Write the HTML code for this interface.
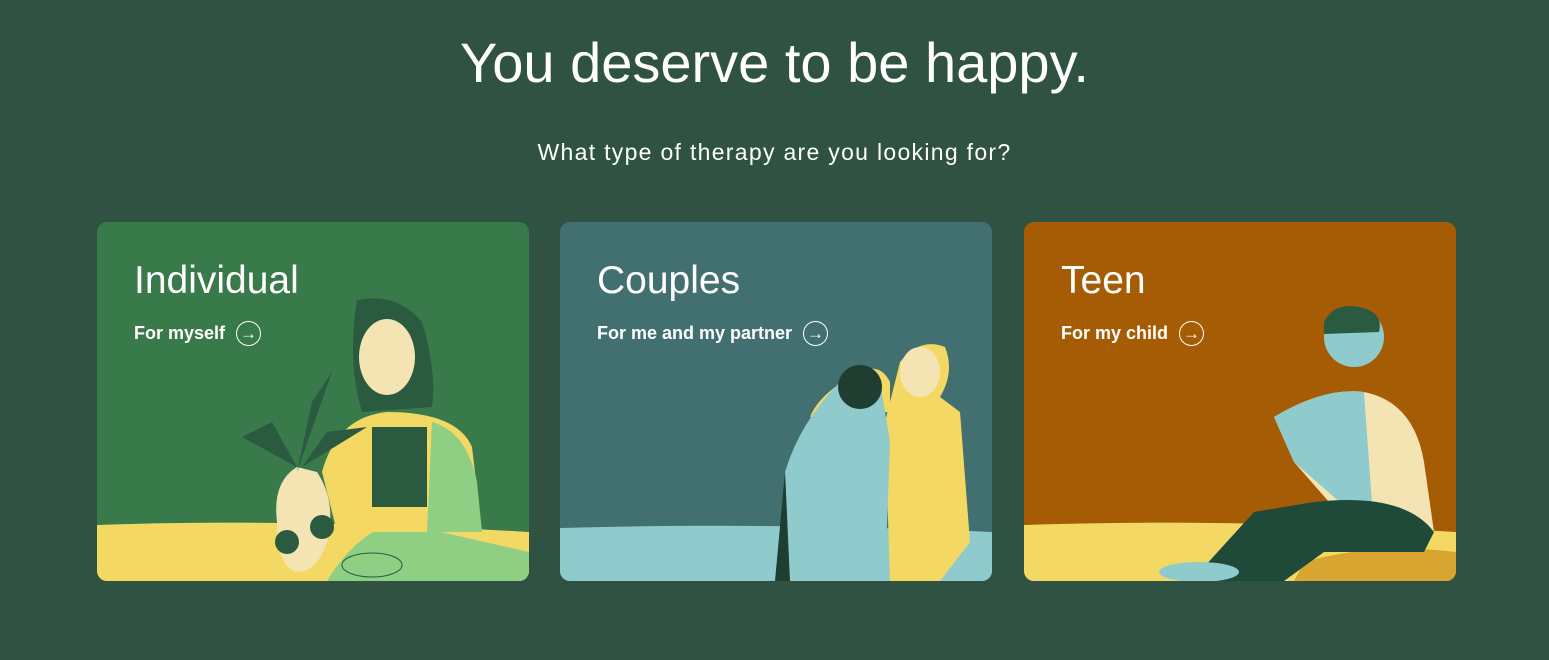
<!DOCTYPE html>
<html><head><meta charset="utf-8"><style>
*{margin:0;padding:0;box-sizing:border-box}
body{width:1549px;height:660px;background:#2f5242;font-family:"Liberation Sans",sans-serif;color:#fff;position:relative;overflow:hidden}
h1{position:absolute;left:0;width:1549px;top:30px;text-align:center;font-weight:normal;font-size:56px}
.sub{position:absolute;left:0;width:1549px;top:139px;text-align:center;font-size:23px;letter-spacing:1.3px}
.card{position:absolute;top:222px;width:432px;height:359px;border-radius:10px;overflow:hidden}
.card svg{position:absolute;left:0;top:0}
.t{position:absolute;left:37px;top:37px;font-size:39px;z-index:2}
.s{position:absolute;left:37px;top:99px;font-size:18px;font-weight:bold;z-index:2;display:flex;align-items:center;gap:11px}
.ar{width:25px;height:25px;border:1.5px solid #fff;border-radius:50%;display:flex;align-items:center;justify-content:center;font-size:17px}
</style></head><body>
<h1>You deserve to be happy.</h1>
<div class="sub">What type of therapy are you looking for?</div>

<div class="card" style="left:97px;background:#397a4a">
<svg width="432" height="359">
<path d="M0 303 Q200 296 432 310 V359 H0Z" fill="#f3d863"/>
<path d="M230 359 Q260 310 300 300 L432 330 V359Z" fill="#8fcf84"/>
<path d="M260 78 Q300 70 325 100 Q340 150 335 185 L265 190 Q250 140 260 78Z" fill="#2a5a3f"/>
<ellipse cx="290" cy="135" rx="28" ry="38" fill="#f5e4b3"/>
<path d="M225 250 Q240 195 290 190 Q360 190 375 225 L385 310 H240Z" fill="#f3d863"/>
<path d="M335 200 Q370 210 380 260 L385 310 H330Z" fill="#8fcf84"/>
<rect x="275" y="205" width="55" height="80" fill="#2a5a3f"/>
<path d="M180 300 Q175 260 200 245 L220 250 Q240 280 230 320 Q220 350 200 350 Q180 345 180 300Z" fill="#f5e4b3"/>
<circle cx="190" cy="320" r="12" fill="#2a5a3f"/><circle cx="225" cy="305" r="12" fill="#2a5a3f"/>
<path d="M200 250 L235 150 L215 180Z M145 215 L200 245 L175 200Z M205 245 L270 205 L230 210Z" fill="#2a5a3f"/>
<ellipse cx="275" cy="343" rx="30" ry="12" fill="#8fcf84" stroke="#2a5a3f"/>
</svg>
<div class="t">Individual</div><div class="s">For myself <span class="ar">&#x2192;</span></div></div>

<div class="card" style="left:560px;background:#426f70">
<svg width="432" height="359">
<path d="M0 306 Q200 300 432 310 V359 H0Z" fill="#8fcbcc"/>
<path d="M340 140 Q360 115 385 125 Q395 150 380 175 L400 190 L410 320 L380 359 H330 L325 200Z" fill="#f3d863"/>
<ellipse cx="360" cy="150" rx="20" ry="25" fill="#f5e4b3"/>
<path d="M300 150 Q320 140 330 160 L330 190 L250 195 Q260 170 300 150Z" fill="#f3d863"/>
<path d="M280 160 Q300 140 320 160 L330 220 L325 359 H230 L225 250 Q240 200 280 160Z" fill="#8fcbcc"/>
<circle cx="300" cy="165" r="22" fill="#1f3d30"/>
<path d="M225 250 L215 359 H230Z" fill="#1f3d30"/>
</svg>
<div class="t">Couples</div><div class="s">For me and my partner <span class="ar">&#x2192;</span></div></div>

<div class="card" style="left:1024px;background:#a65c05">
<svg width="432" height="359">
<path d="M0 303 Q200 296 432 310 V359 H0Z" fill="#f3d863"/>
<path d="M280 340 Q350 320 432 330 V359 H270Z" fill="#d8a530"/>
<circle cx="330" cy="115" r="30" fill="#8fcbcc"/>
<path d="M300 100 Q310 80 335 85 Q360 90 355 110 L300 112Z" fill="#2a5a3f"/>
<path d="M250 195 Q300 165 340 170 Q390 180 400 240 L410 310 L340 320 L270 240Z" fill="#f5e4b3"/>
<path d="M250 195 Q300 165 340 170 L350 310 L270 240Z" fill="#8fcbcc"/>
<path d="M180 345 L230 290 L290 280 Q380 270 410 310 L400 330 L300 330 L260 359 H180Z" fill="#1f4a3a"/>
<ellipse cx="175" cy="350" rx="40" ry="10" fill="#8fcbcc"/>
</svg>
<div class="t">Teen</div><div class="s">For my child <span class="ar">&#x2192;</span></div></div>
</body></html>
